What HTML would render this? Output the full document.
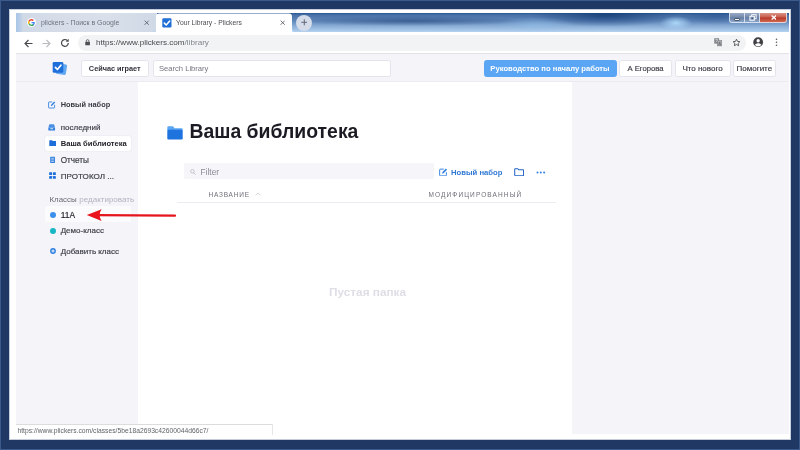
<!DOCTYPE html>
<html lang="ru">
<head>
<meta charset="utf-8">
<title>Your Library - Plickers</title>
<style>
*{box-sizing:border-box;margin:0;padding:0}
html,body{width:800px;height:450px;overflow:hidden;background:#203864;font-family:"Liberation Sans",sans-serif;}
.abs{position:absolute}
#frame{left:0;top:0;width:800px;height:450px;background:#203864;border:1px solid #3c5a8b;}
#paper{left:8px;top:8px;width:782px;height:431px;background:#ffffff;border:1px solid #c5cddc;}
#win{left:15px;top:12px;width:773px;height:421.5px;background:#fff;overflow:hidden;filter:blur(0.45px);}
/* tab strip */
#tabstrip{left:0;top:-0.400px;width:773px;height:19.700px;background:
 radial-gradient(ellipse 16px 7px at 660px 10px, rgba(175,218,250,0.95), rgba(175,218,250,0) 100%),
 radial-gradient(ellipse 40px 8px at 520px 12px, rgba(150,195,235,0.5), rgba(150,195,235,0) 100%),
 radial-gradient(ellipse 75px 12px at 590px 2px, rgba(18,58,115,0.8), rgba(18,58,115,0) 100%),
 radial-gradient(ellipse 45px 9px at 700px 3px, rgba(30,72,130,0.45), rgba(30,72,130,0) 100%),
 radial-gradient(ellipse 115px 5px at 395px 8px, rgba(36,70,120,0.6), rgba(36,70,120,0) 100%),
 linear-gradient(to bottom, #295693 0, #4871a8 10%, #6188bb 42%, #8eb1d9 72%, #b5d2f0 100%);}
#tab1{left:0;top:-0.400px;width:141px;height:19.700px;background:linear-gradient(to right,#a9c5e5 0,#b9cee8 4px,#d0d9e6 7px,#d6dde9 40px,#d9e0ea 90px,#d0d9e6 140px);border-radius:0 0 5px 0;}
#tab2{left:139px;top:0;width:137px;height:20px;background:#fff;border-radius:4px 4px 0 0;}
.tabtxt{font-size:7.5px;color:#4a4d52;white-space:nowrap;top:5px;}
/* toolbar */
#toolbar{left:0;top:19px;width:773px;height:21.500px;background:#fff;border-bottom:1px solid #e3e3e6;}
#urlpill{left:61.5px;top:2.5px;width:668.5px;height:16px;border-radius:8px;background:#f1f3f4;}
#url{left:80px;top:5.5px;font-size:8.1px;color:#46494d;white-space:nowrap;}
#url span{color:#80868b}
/* app header */
#apphead{left:0;top:40.500px;width:773px;height:28px;background:#f4f4f9;border-bottom:1px solid #ebebf2;}
.btn{height:17px;top:6.200px;background:#fff;border:1px solid #e4e4ec;border-radius:2.500px;font-size:7px;color:#3d3d47;text-align:center;line-height:15px;white-space:nowrap;}
.med{-webkit-text-stroke:0.180px currentColor;}
/* body */
#sidebar{left:0;top:68.500px;width:122px;height:353px;background:#f4f4f9;}
#main{left:122px;top:69px;width:434.500px;height:352px;background:#fff;}
#right{left:556.300px;top:68.500px;width:217px;height:352.500px;background:#f4f4f9;}
.side{font-size:8px;color:#3d3d48;white-space:nowrap;left:44.700px;}
.colhd{top:178px;font-size:6.500px;color:#6e6e79;white-space:nowrap;}
#status{left:0;top:410.500px;width:257px;height:11px;background:#fff;border-top:1px solid #dcdcdc;border-right:1px solid #e6e6e6;font-size:6.740px;color:#5f6368;line-height:11px;padding-left:1.500px;white-space:nowrap;}
</style>
</head>
<body>
<div id="frame" class="abs">
<div id="paper" class="abs"></div>
<div id="win" class="abs">
  <div id="tabstrip" class="abs"></div>
  <div id="tab1" class="abs"></div>
  <svg class="abs" style="left:136.500px;top:-0.500px" width="142" height="20" viewBox="0 0 142 20"><path d="M0 20Q3 20 3 16.500V3.500Q3 0.500 6 0.500H136Q139 0.500 139 3.500V16.500Q139 20 142 20Z" fill="#fff"/></svg>
  <!-- google favicon -->
  <div class="abs" style="left:11.200px;top:5px;width:8.800px;height:8.800px;border-radius:50%;background:rgba(255,255,255,0.900)"></div>
  <svg class="abs" style="left:12.100px;top:5.900px" width="7" height="7" viewBox="0 0 18 18">
    <path d="M17.6 9.2c0-.6-.1-1.2-.2-1.8H9v3.5h4.8c-.2 1.1-.8 2-1.800 2.700v2.200h2.900c1.700-1.600 2.700-3.900 2.700-6.600z" fill="#4285F4"/>
    <path d="M9 18c2.400 0 4.500-.8 6-2.200l-2.900-2.200c-.8.500-1.800.9-3.100.9-2.300 0-4.300-1.600-5-3.700H1v2.300C2.500 16 5.500 18 9 18z" fill="#34A853"/>
    <path d="M4 10.700c-.2-.5-.3-1.100-.3-1.700s.1-1.200.3-1.700V5H1C.4 6.200 0 7.600 0 9s.4 2.800 1 4l3-2.300z" fill="#FBBC05"/>
    <path d="M9 3.600c1.300 0 2.500.500 3.400 1.300L15 2.300C13.500.9 11.400 0 9 0 5.500 0 2.500 2 1 5l3 2.300C4.700 5.200 6.700 3.600 9 3.600z" fill="#EA4335"/>
  </svg>
  <div class="abs tabtxt" style="left:25px;top:5.600px;color:#6d737e;font-size:6.900px">plickers - Поиск в Google</div>
  <svg class="abs" style="left:128.300px;top:6.700px" width="5.400" height="5.400" viewBox="0 0 6 6"><path d="M0.700 0.700L5.300 5.300M5.300 0.700L0.700 5.300" stroke="#555a62" stroke-width="0.950" fill="none"/></svg>
  <!-- plickers favicon -->
  <svg class="abs" style="left:146px;top:5px" width="10" height="10" viewBox="0 0 10 10">
    <rect x="0.300" y="0.300" width="9.200" height="9.200" rx="1.200" fill="#1f6fd6"/>
    <path d="M2.300 5.100L4.200 7L7.700 3" stroke="#fff" stroke-width="1.500" fill="none" stroke-linecap="round" stroke-linejoin="round"/>
  </svg>
  <div class="abs tabtxt" style="left:160px;font-size:6.750px;top:5.500px">Your Library - Plickers</div>
  <svg class="abs" style="left:263.800px;top:6.700px" width="5.400" height="5.400" viewBox="0 0 6 6"><path d="M0.700 0.700L5.300 5.300M5.300 0.700L0.700 5.300" stroke="#555a62" stroke-width="0.950" fill="none"/></svg>
  <!-- new tab -->
  <div class="abs" style="left:279.800px;top:1.500px;width:16px;height:16px;border-radius:50%;background:#d4dce9"></div>
  <svg class="abs" style="left:284.500px;top:6.200px" width="6.600" height="6.600" viewBox="0 0 7 7"><path d="M3.500 0.300V6.700M0.300 3.500H6.700" stroke="#565d6b" stroke-width="0.950" fill="none"/></svg>
  <!-- window controls -->
  <div class="abs" style="left:713px;top:-1px;width:16px;height:11px;border:1px solid rgba(225,235,250,0.850);border-radius:0 0 0 3px;background:linear-gradient(#98a9c4,#7489ab 48%,#657da2 52%,#8ca6c8)"></div>
  <div class="abs" style="left:729px;top:-1px;width:15px;height:11px;border:1px solid rgba(225,235,250,0.850);border-left:none;background:linear-gradient(#98a9c4,#7489ab 48%,#657da2 52%,#8ca6c8)"></div>
  <div class="abs" style="left:744px;top:-1px;width:27px;height:11px;border:1px solid rgba(235,225,225,0.850);border-left:none;border-radius:0 0 3px 0;background:linear-gradient(#d99385,#c9594a 48%,#b63a28 52%,#cf6650)"></div>
  <div class="abs" style="left:718px;top:5px;width:6px;height:2.500px;background:#fff;border:0.500px solid #4a5a70;border-radius:1px"></div>
  <svg class="abs" style="left:732.500px;top:1.300px" width="8" height="7.200" viewBox="0 0 9 8"><rect x="3" y="0.700" width="5" height="4.500" fill="none" stroke="#fff" stroke-width="1"/><rect x="1" y="2.500" width="5" height="4.500" fill="#7a93b8" stroke="#fff" stroke-width="1.100"/><rect x="3" y="4.200" width="1.300" height="1.300" fill="#2a3a55"/></svg>
  <svg class="abs" style="left:754.700px;top:2px" width="5.800" height="5" viewBox="0 0 7 6"><path d="M0.800 0.600L6.200 5.400M6.200 0.600L0.800 5.400" stroke="#fff" stroke-width="1.700" fill="none"/></svg>

  <div id="toolbar" class="abs">
    <div id="urlpill" class="abs"></div>
    <!-- back -->
    <svg class="abs" style="left:8px;top:6.500px" width="9" height="9" viewBox="0 0 9 9"><path d="M8.500 4.500H1.200M4.500 1L1 4.500L4.500 8" stroke="#46484c" stroke-width="1.100" fill="none"/></svg>
    <!-- forward -->
    <svg class="abs" style="left:26px;top:6.500px" width="9" height="9" viewBox="0 0 9 9"><path d="M0.500 4.500H7.800M4.500 1L8 4.500L4.500 8" stroke="#b9bbbe" stroke-width="1.100" fill="none"/></svg>
    <!-- reload -->
    <svg class="abs" style="left:44px;top:6px" width="10" height="10" viewBox="0 0 10 10"><path d="M8.300 5A3.400 3.400 0 1 1 7.300 2.500" stroke="#46484c" stroke-width="1.200" fill="none"/><path d="M8.700 0.800V3.800H5.700Z" fill="#46484c"/></svg>
    <!-- lock -->
    <svg class="abs" style="left:68.700px;top:7.200px" width="5.200" height="7" viewBox="0 0 6 8"><rect x="0.300" y="3" width="5.400" height="4.300" rx="0.500" fill="#4c4f54"/><path d="M1.500 3.200V2.200A1.500 1.500 0 0 1 4.500 2.200V3.200" stroke="#4c4f54" stroke-width="0.900" fill="none"/></svg>
    <div id="url" class="abs">https://www.plickers.com<span>/library</span></div>
    <!-- translate -->
    <svg class="abs" style="left:697.500px;top:6.300px" width="8.300" height="8.300" viewBox="0 0 9 9"><rect x="0.300" y="0.300" width="5.200" height="5.800" fill="#7d8084"/><rect x="3.600" y="2.600" width="5" height="6" fill="#a9acb0" stroke="#6d7074" stroke-width="0.500"/><path d="M1.500 1.800H4.300M2.900 1.200V1.800M1.800 4.500Q3.500 3.800 3.900 1.900" stroke="#fff" stroke-width="0.550" fill="none"/><path d="M5 7.800L6.100 4.300L7.300 7.800M5.400 6.700H6.900" stroke="#55585c" stroke-width="0.550" fill="none"/></svg>
    <!-- star -->
    <svg class="abs" style="left:715.500px;top:6px" width="9" height="9" viewBox="0 0 24 24"><path d="M12 3.200l2.700 5.800 6.300.8-4.600 4.400 1.200 6.300L12 17.400l-5.600 3.100 1.200-6.300L3 9.800l6.300-.8z" fill="none" stroke="#46484c" stroke-width="2.300" stroke-linejoin="round"/></svg>
    <!-- profile -->
    <svg class="abs" style="left:737.300px;top:5px" width="10.300" height="10.300" viewBox="0 0 20 20"><circle cx="10" cy="10" r="9.500" fill="#3f4145"/><circle cx="10" cy="7.300" r="3.200" fill="#fff"/><path d="M3.600 15.200Q10 9.500 16.400 15.200A8 8 0 0 1 3.600 15.200Z" fill="#fff"/></svg>
    <!-- menu -->
    <svg class="abs" style="left:758.800px;top:6px" width="3" height="8.500" viewBox="0 0 3 9"><circle cx="1.500" cy="1.300" r="0.850" fill="#55585c"/><circle cx="1.500" cy="4.500" r="0.850" fill="#55585c"/><circle cx="1.500" cy="7.700" r="0.850" fill="#55585c"/></svg>
  </div>

  <div id="apphead" class="abs">
    <!-- logo -->
    <svg class="abs" style="left:36px;top:7.500px" width="16" height="15" viewBox="0 0 16 15">
      <rect x="4.200" y="2.800" width="10.300" height="10.600" rx="1.300" fill="#62a8f3" transform="rotate(9 9.300 8.100)"/>
      <rect x="0.700" y="0.900" width="10.600" height="10.800" rx="1.300" fill="#1e6fd9"/>
      <path d="M3.400 6.400L5.400 8.500L8.900 4.200" stroke="#fff" stroke-width="1.700" fill="none" stroke-linecap="round" stroke-linejoin="round"/>
    </svg>
    <div class="abs btn" style="left:65px;width:67.500px;font-weight:bold;font-size:7.300px;color:#33333c">Сейчас играет</div>
    <div class="abs btn" style="left:136.500px;width:238.500px;text-align:left;padding-left:5.500px;color:#74747f;font-size:7.600px">Search Library</div>
    <div class="abs btn" style="left:467.500px;width:133px;background:#5aa6f4;border-color:#5aa6f4;color:#fff;font-weight:bold;font-size:7.650px">Руководство по началу работы</div>
    <div class="abs btn med" style="left:603px;width:53px;font-size:7.700px">А Егорова</div>
    <div class="abs btn med" style="left:658.500px;width:56px;font-size:8px">Что нового</div>
    <div class="abs btn med" style="left:717px;width:42.700px;font-size:8px;padding:0">Помогите</div>
  </div>

  <div id="sidebar" class="abs"></div>
  <div id="main" class="abs"></div>
  <div id="right" class="abs"></div>

  <!-- sidebar items -->
  <svg class="abs" style="left:32.200px;top:88px" width="7.600" height="7.600" viewBox="0 0 9 9"><path d="M5 1.200H1.300A0.600 0.600 0 0 0 0.700 1.800V7.700A0.600 0.600 0 0 0 1.300 8.300H7.200A0.600 0.600 0 0 0 7.800 7.700V4.500" stroke="#2f7fe0" stroke-width="1" fill="none"/><path d="M3.300 6L3.700 4.300L7.300 0.600L8.500 1.800L4.900 5.500Z" fill="#2f7fe0"/></svg>
  <div class="abs side" style="top:87.100px;font-weight:bold;font-size:7.400px;color:#3a3a45">Новый набор</div>

  <svg class="abs" style="left:32.300px;top:111px" width="7.400" height="6.800" viewBox="0 0 9 8.500"><path d="M1.600 0.400H7.400L8.700 4.300H0.300Z" fill="#4a8fe6"/><rect x="0.300" y="4.300" width="8.400" height="3.800" rx="0.700" fill="#2f7fe0"/><rect x="2.700" y="5.400" width="3.600" height="1.100" fill="#f4f4f9"/></svg>
  <div class="abs side med" style="top:109.500px">последний</div>

  <div class="abs" style="left:28.500px;top:122.500px;width:86.500px;height:15.500px;background:#fff;border-radius:2px;box-shadow:0 0 1px rgba(120,120,150,0.350)"></div>
  <svg class="abs" style="left:32.800px;top:127px" width="7.700" height="6.400" viewBox="0 0 9 7.500"><path d="M0.300 0.900A0.600 0.600 0 0 1 0.900 0.300H3.600L4.500 1.300H8.100A0.600 0.600 0 0 1 8.700 1.900V6.600A0.600 0.600 0 0 1 8.100 7.200H0.900A0.600 0.600 0 0 1 0.300 6.600Z" fill="#1e6fd9"/></svg>
  <div class="abs side" style="top:126.100px;font-weight:bold;font-size:7.600px;color:#23232b">Ваша библиотека</div>

  <svg class="abs" style="left:33.600px;top:143.300px" width="5.200" height="7.800" viewBox="0 0 7 9"><rect x="0.300" y="0.200" width="6.400" height="8.600" rx="0.700" fill="#2f7fe0"/><path d="M1.700 2.300H5.300M1.700 4.500H5.300M1.700 6.700H5.300" stroke="#f4f4f9" stroke-width="0.900"/></svg>
  <div class="abs side med" style="top:142.500px;font-size:8.200px">Отчеты</div>

  <svg class="abs" style="left:32.600px;top:158.800px" width="7" height="7" viewBox="0 0 8 8"><rect x="0.200" y="0.200" width="3.300" height="3.300" rx="0.500" fill="#1e6fd9"/><rect x="4.500" y="0.200" width="3.300" height="3.300" rx="0.500" fill="#1e6fd9"/><rect x="0.200" y="4.500" width="3.300" height="3.300" rx="0.500" fill="#1e6fd9"/><rect x="4.500" y="4.500" width="3.300" height="3.300" rx="0.500" fill="#1e6fd9"/></svg>
  <div class="abs side med" style="top:158.500px;font-size:8.100px">ПРОТОКОЛ ...</div>

  <div class="abs side" style="top:181.700px;left:33.500px;color:#6a6a76;font-size:7.900px">Классы <span style="color:#b3b3c2;font-size:8px;margin-left:0.500px">редактировать</span></div>

  <div class="abs" style="left:28.500px;top:193px;width:86.500px;height:16.300px;background:#fbfbfd;border-radius:2px"></div>
  <div class="abs" style="left:33.600px;top:198.500px;width:6px;height:6px;border-radius:50%;background:#3b8fea"></div>
  <div class="abs side med" style="top:196.500px;font-size:8.400px;color:#23232b">11А</div>

  <div class="abs" style="left:33.600px;top:215px;width:6px;height:6px;border-radius:50%;background:#19b7c3"></div>
  <div class="abs side med" style="top:213.200px">Демо-класс</div>

  <svg class="abs" style="left:33.600px;top:235.300px" width="6" height="6" viewBox="0 0 6 6"><circle cx="3" cy="3" r="2.900" fill="#2f7fe0"/><path d="M3 1.400V4.600M1.400 3H4.600" stroke="#fff" stroke-width="0.900"/></svg>
  <div class="abs side med" style="top:234px">Добавить класс</div>

  <!-- red arrow -->
  <svg class="abs" style="left:68px;top:190.400px" width="96" height="24" viewBox="0 0 96 24">
    <path d="M91 12.700L13 12.200" stroke="#e6141c" stroke-width="2.200" fill="none" stroke-linecap="round"/>
    <path d="M2.800 12L17.600 6.300Q13.600 12 17.600 17.900Z" fill="#ea141c"/>
  </svg>

  <!-- main -->
  <svg class="abs" style="left:151px;top:112.800px" width="16" height="14" viewBox="0 0 16 14"><path d="M0.300 1.500A1.200 1.200 0 0 1 1.500 0.300H6L7.600 2.200H14.500A1.200 1.200 0 0 1 15.700 3.400V4.500H0.300Z" fill="#5aa6f4"/><rect x="0.300" y="3.800" width="15.400" height="9.700" rx="1.200" fill="#1e73de"/></svg>
  <div class="abs" style="left:173.500px;top:106.500px;font-size:19.400px;font-weight:bold;color:#1b1b24;white-space:nowrap;transform:scaleY(1.050);transform-origin:0 80%">Ваша библиотека</div>

  <div class="abs" style="left:167.500px;top:150px;width:250.500px;height:16.200px;background:#f5f5fa;border-radius:2px"></div>
  <svg class="abs" style="left:173.500px;top:155.500px" width="6" height="6" viewBox="0 0 6 6"><circle cx="2.400" cy="2.400" r="1.800" stroke="#b9b9c6" stroke-width="0.800" fill="none"/><path d="M3.700 3.700L5.600 5.600" stroke="#b9b9c6" stroke-width="0.800"/></svg>
  <div class="abs" style="left:184.500px;top:154px;font-size:8.400px;color:#8b8b98">Filter</div>

  <svg class="abs" style="left:423px;top:154.500px" width="8.500" height="8.500" viewBox="0 0 9 9"><path d="M5 1.200H1.300A0.600 0.600 0 0 0 0.700 1.800V7.700A0.600 0.600 0 0 0 1.300 8.300H7.200A0.600 0.600 0 0 0 7.800 7.700V4.500" stroke="#2f7fe0" stroke-width="1" fill="none"/><path d="M3.300 6L3.700 4.300L7.300 0.600L8.500 1.800L4.900 5.500Z" fill="#2f7fe0"/></svg>
  <div class="abs" style="left:435px;top:154.500px;font-size:7.700px;color:#2f78d6;font-weight:bold;white-space:nowrap">Новый набор</div>
  <svg class="abs" style="left:498px;top:154.700px" width="10.300" height="8.300" viewBox="0 0 11 9"><path d="M0.700 1.300A0.600 0.600 0 0 1 1.300 0.700H4L5 1.900H9.700A0.600 0.600 0 0 1 10.300 2.500V7.700A0.600 0.600 0 0 1 9.700 8.300H1.300A0.600 0.600 0 0 1 0.700 7.700Z" stroke="#1f63c6" stroke-width="1.100" fill="none"/></svg>
  <svg class="abs" style="left:520px;top:157.800px" width="10" height="3" viewBox="0 0 10 3"><circle cx="1.500" cy="1.500" r="1" fill="#2f7fe0"/><circle cx="4.800" cy="1.500" r="1" fill="#2f7fe0"/><circle cx="8.100" cy="1.500" r="1" fill="#2f7fe0"/></svg>

  <div class="abs colhd" style="left:192.500px;letter-spacing:0.780px">НАЗВАНИЕ</div>
  <svg class="abs" style="left:239px;top:179px" width="6" height="4" viewBox="0 0 6 4"><path d="M0.600 3.300L3 0.900L5.400 3.300" stroke="#c3c3cf" stroke-width="0.700" fill="none"/></svg>
  <div class="abs colhd" style="left:412.500px;letter-spacing:1.110px">МОДИФИЦИРОВАННЫЙ</div>
  <div class="abs" style="left:161px;top:188.500px;width:379px;height:1px;background:#ebebf1"></div>

  <div class="abs" style="left:313px;top:272px;font-size:11.800px;color:#dedee6;font-weight:bold;white-space:nowrap">Пустая папка</div>

  <div id="status" class="abs">https://www.plickers.com/classes/5be18a2693c42600044d66c7/</div>
</div>
</div>
</body>
</html>
